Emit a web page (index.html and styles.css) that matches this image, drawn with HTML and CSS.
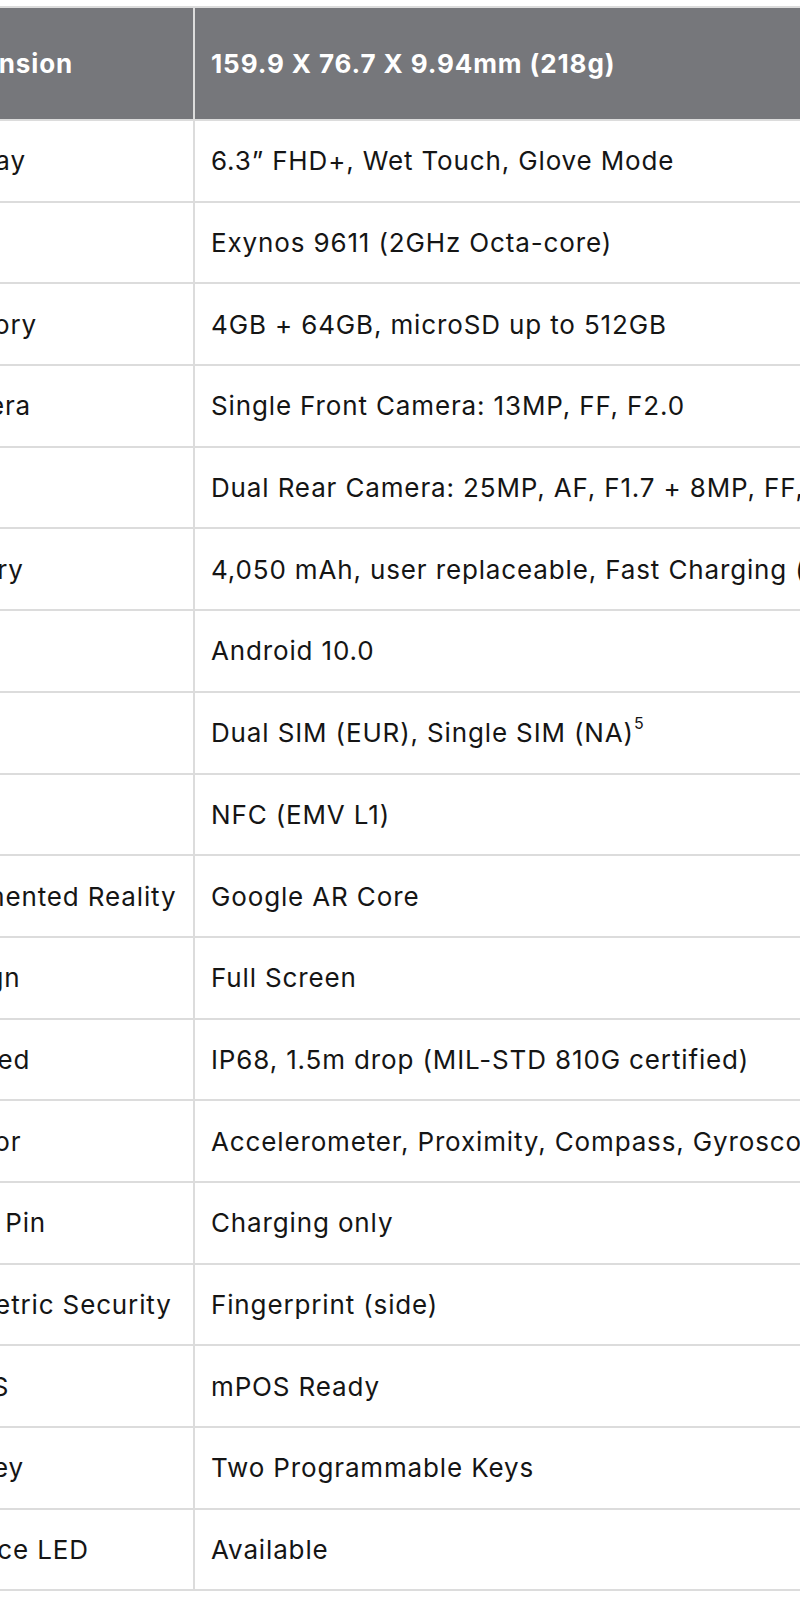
FILE: index.html
```html
<!DOCTYPE html>
<html lang="en">
<head>
<meta charset="utf-8">
<title>Specifications</title>
<link rel="stylesheet" href="styles.css">
</head>
<body>
<div class="scroller">
  <table class="spec">
    <colgroup><col class="c1"><col class="c2"></colgroup>
    <thead>
      <tr><th>Dimension</th><th>159.9 X 76.7 X 9.94mm (218g)</th></tr>
    </thead>
    <tbody>
      <tr><td>Display</td><td>6.3” FHD+, Wet Touch, Glove Mode</td></tr>
      <tr><td>CPU</td><td>Exynos 9611 (2GHz Octa-core)</td></tr>
      <tr><td>Memory</td><td>4GB + 64GB, microSD up to 512GB</td></tr>
      <tr><td>Camera</td><td>Single Front Camera: 13MP, FF, F2.0</td></tr>
      <tr><td></td><td>Dual Rear Camera: 25MP, AF, F1.7 + 8MP, FF, F2.2</td></tr>
      <tr><td>Battery</td><td>4,050 mAh, user replaceable, Fast Charging (15W)</td></tr>
      <tr><td>OS</td><td>Android 10.0</td></tr>
      <tr><td>SIM</td><td>Dual SIM (EUR), Single SIM (NA)<sup>5</sup></td></tr>
      <tr><td>NFC</td><td>NFC (EMV L1)</td></tr>
      <tr><td>Augmented Reality</td><td>Google AR Core</td></tr>
      <tr><td>Design</td><td>Full Screen</td></tr>
      <tr><td>Rugged</td><td>IP68, 1.5m drop (MIL-STD 810G certified)</td></tr>
      <tr><td>Sensor</td><td>Accelerometer, Proximity, Compass, Gyroscope</td></tr>
      <tr><td>Pogo Pin</td><td>Charging only</td></tr>
      <tr><td>Biometric Security</td><td>Fingerprint (side)</td></tr>
      <tr><td>mPOS</td><td>mPOS Ready</td></tr>
      <tr><td>XC Key</td><td>Two Programmable Keys</td></tr>
      <tr><td>Service LED</td><td>Available</td></tr>
    </tbody>
  </table>
</div>
</body>
</html>
```
FILE: styles.css
```css
html, body {
  margin: 0;
  padding: 0;
  background: #ffffff;
}
body {
  font-family: Inter, "Liberation Sans", sans-serif;
  color: #151515;
}
.scroller {
  width: 800px;
  overflow: hidden;
  padding-top: 6px;
}
.spec {
  border-collapse: collapse;
  table-layout: fixed;
  width: 1200px;
  margin-left: -88px;
  font-size: 26px;
}
.c1 { width: 281px; }
.c2 { width: 919px; }
.spec th,
.spec td {
  border: 2px solid #dcdcdc;
  text-align: left;
  vertical-align: middle;
  padding: 0 16px;
  white-space: nowrap;
  overflow: hidden;
}
.spec th {
  background: #76777b;
  color: #ffffff;
  font-weight: 700;
  letter-spacing: 0.9px;
  height: 111px;
}
.spec td {
  height: 79.7px;
  font-weight: 400;
  letter-spacing: 0.86px;
}
.spec sup {
  font-size: 16px;
  vertical-align: top;
  line-height: 1;
  position: relative;
  top: -2px;
}
```
